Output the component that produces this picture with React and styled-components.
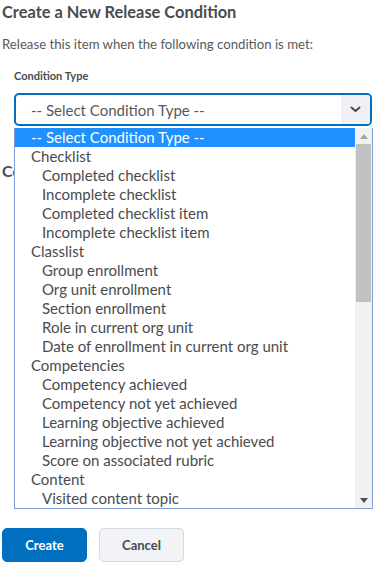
import React from 'react';
import styled, { createGlobalStyle } from 'styled-components';

const GlobalStyle = createGlobalStyle`
  body {
    margin: 0;
    background: #fff;
    font-family: Lato, "Open Sans", sans-serif;
    color: #494c4e;
  }
`;

const Page = styled.div`
  width: 379px;
  height: 567px;
  padding: 0 2px;
  box-sizing: border-box;
  overflow: hidden;
`;

const Title = styled.h1`
  margin: 0;
  padding-top: 1px;
  font-size: 16.4px;
  line-height: 22px;
  font-weight: 700;
  color: #494c4e;
`;

const Intro = styled.p`
  margin: 11px 0 0;
  font-size: 13.2px;
  line-height: 20px;
  color: #565a5c;
`;

const Field = styled.div`
  margin: 14px 0 0 12px;
  position: relative;
  width: 358px;
`;

const Label = styled.div`
  font-size: 11px;
  line-height: 16px;
  font-weight: 700;
  color: #494c4e;
`;

const SelectBox = styled.div`
  margin-top: 9px;
  height: 33px;
  box-sizing: border-box;
  border: 2px solid #006fbf;
  border-radius: 5px;
  display: flex;
  align-items: center;
  overflow: hidden;
`;

const SelectText = styled.div`
  flex: 1;
  padding-left: 15px;
  font-size: 15px;
  color: #565a5c;
`;

const ArrowCell = styled.div`
  width: 29px;
  align-self: stretch;
  background: #eef0f4;
  display: flex;
  align-items: center;
  justify-content: center;
`;

const List = styled.div`
  position: absolute;
  left: 0;
  top: 60px;
  width: 359px;
  height: 381px;
  box-sizing: border-box;
  border: 1px solid #7d9ed8;
  border-top: none;
  background: #fff;
  display: flex;
  z-index: 2;
`;

const Options = styled.div`
  flex: 1;
  display: flex;
  flex-direction: column;
`;

const Option = styled.div`
  height: 19px;
  line-height: 19px;
  font-size: 15px;
  white-space: nowrap;
  padding-left: ${p => (p.$child ? 27 : 16)}px;
  background: ${p => (p.$active ? '#1e90ff' : 'transparent')};
  color: ${p => (p.$active ? '#fff' : '#494c4e')};
`;

const Scrollbar = styled.div`
  width: 17px;
  background: #f1f1f1;
  display: flex;
  flex-direction: column;
  align-items: center;
`;

const ScrollArrow = styled.div`
  height: 16px;
  display: flex;
  align-items: center;
  justify-content: center;
`;

const Thumb = styled.div`
  width: 15px;
  height: 158px;
  background: #c1c1c1;
`;

const Spacer = styled.div`
  flex: 1;
`;

const Hidden = styled.div`
  margin-top: 35px;
  height: 367px;
`;

const SubHeading = styled.h2`
  margin: 0;
  font-size: 16px;
  line-height: 20px;
  font-weight: 700;
  color: #494c4e;
`;

const Actions = styled.div`
  display: flex;
  gap: 12px;
`;

const Button = styled.button`
  width: 85px;
  height: 34px;
  border-radius: 5px;
  font-family: Lato, "Open Sans", sans-serif;
  font-size: 13px;
  font-weight: 700;
  cursor: pointer;
  border: 1px solid ${p => (p.$primary ? '#006fbf' : '#d3d9e3')};
  background: ${p => (p.$primary ? '#006fbf' : '#f1f3f6')};
  color: ${p => (p.$primary ? '#fff' : '#494c4e')};
`;

const options = [
  { text: '-- Select Condition Type --', active: true },
  { text: 'Checklist' },
  { text: 'Completed checklist', child: true },
  { text: 'Incomplete checklist', child: true },
  { text: 'Completed checklist item', child: true },
  { text: 'Incomplete checklist item', child: true },
  { text: 'Classlist' },
  { text: 'Group enrollment', child: true },
  { text: 'Org unit enrollment', child: true },
  { text: 'Section enrollment', child: true },
  { text: 'Role in current org unit', child: true },
  { text: 'Date of enrollment in current org unit', child: true },
  { text: 'Competencies' },
  { text: 'Competency achieved', child: true },
  { text: 'Competency not yet achieved', child: true },
  { text: 'Learning objective achieved', child: true },
  { text: 'Learning objective not yet achieved', child: true },
  { text: 'Score on associated rubric', child: true },
  { text: 'Content' },
  { text: 'Visited content topic', child: true },
];

const App = () => (
  <>
    <GlobalStyle />
    <Page>
      <Title>Create a New Release Condition</Title>
      <Intro>Release this item when the following condition is met:</Intro>
      <Field>
        <Label>Condition Type</Label>
        <SelectBox>
          <SelectText>-- Select Condition Type --</SelectText>
          <ArrowCell>
            <svg width="11" height="7" viewBox="0 0 11 7">
              <path d="M1.5 1.5 L5.5 5 L9.5 1.5" fill="none" stroke="#494c4e" strokeWidth="2" strokeLinecap="round" strokeLinejoin="round" />
            </svg>
          </ArrowCell>
        </SelectBox>
        <List>
          <Options>
            {options.map(o => (
              <Option key={o.text} $child={o.child} $active={o.active}>{o.text}</Option>
            ))}
          </Options>
          <Scrollbar>
            <ScrollArrow>
              <svg width="8" height="5" viewBox="0 0 8 5"><path d="M0 5 L4 0 L8 5 Z" fill="#a3a3a3" /></svg>
            </ScrollArrow>
            <Thumb />
            <Spacer />
            <ScrollArrow>
              <svg width="8" height="5" viewBox="0 0 8 5"><path d="M0 0 L4 5 L8 0 Z" fill="#505050" /></svg>
            </ScrollArrow>
          </Scrollbar>
        </List>
      </Field>
      <Hidden>
        <SubHeading>Conditions</SubHeading>
      </Hidden>
      <Actions>
        <Button $primary>Create</Button>
        <Button>Cancel</Button>
      </Actions>
    </Page>
  </>
);

export default App;
